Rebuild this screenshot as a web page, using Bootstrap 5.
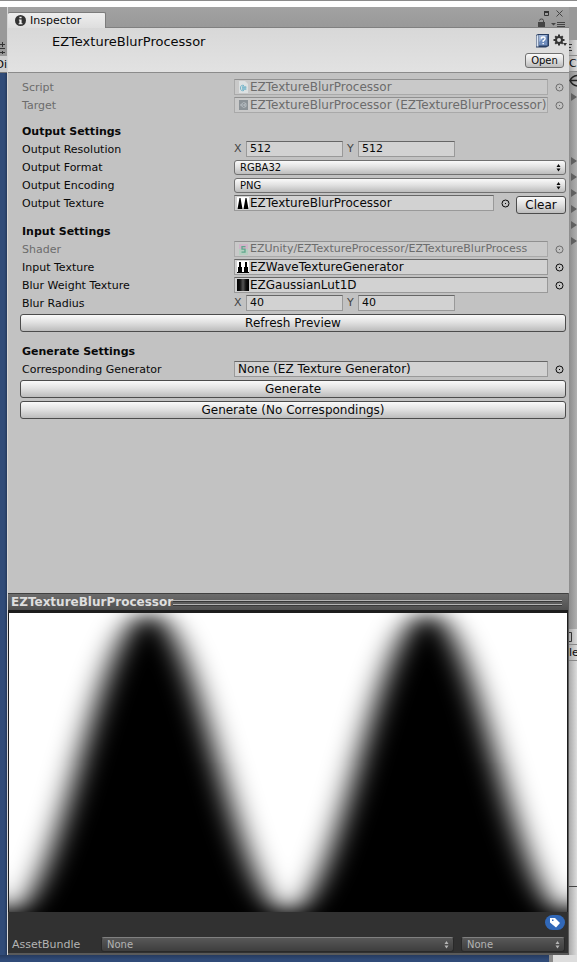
<!DOCTYPE html>
<html lang="en">
<head>
<meta charset="utf-8">
<meta name="viewport" content="width=device-width, initial-scale=1">
<title>Inspector</title>
<link href="https://cdn.jsdelivr.net/npm/bootstrap@5.3.0/dist/css/bootstrap.min.css" rel="stylesheet">
<style>
body{font-family:"DejaVu Sans",Verdana,sans-serif;font-size:11px;line-height:16px;color:#090909;background:#304b78}
svg{display:block;flex:none}
button,input,select{font:inherit;color:inherit}
.desk{display:grid;grid-template-columns:7px minmax(0,1fr) 8px;grid-template-rows:7px auto 1fr;min-height:100vh}
.menu-strip{grid-column:1/-1;background:#fff;border-top:1px solid #8b8b8b}
.left-dock,.right-dock{overflow:hidden;white-space:nowrap}
.left-dock{background:linear-gradient(90deg,#304b78 60%,#24395c)}
.dock-tab{height:33px;background:#999}
.dock-tool{height:16px;background:#999}
.dock-name{height:17px;line-height:17px;background:#cfcfcf;border-bottom:1px solid #777;display:flex;justify-content:flex-end}
.right-dock{background:linear-gradient(90deg,#8c8c8c,#b0b0b0)}
.side-tab{height:16px;line-height:16px;background:linear-gradient(90deg,#aaa,#dadada);border-bottom:1px solid #888}
.side-list{height:557px}
.side-pane{height:226px;background:linear-gradient(90deg,#aaa,#dcdcdc);border-bottom:1px solid #444}
.side-rest{height:68px;background:linear-gradient(90deg,#aaa,#dcdcdc)}
.desk-foot{grid-column:1/-1;background:linear-gradient(#263b5f,#304b78 5px)}
.desk-foot span{width:28px;background:#ddd;border-left:4px solid #8a8a8a}
.inspector{background:#c2c2c2;border-left:1px solid #d6d6d6}
.tabs-bar{height:21px;background:linear-gradient(#a2a2a2,#999);border-bottom:1px solid #808080}
.tab-item{height:16px;width:98px;background:linear-gradient(#eee,#dedede);border:1px solid #7c7c7c;border-width:1px 1px 0 0;border-radius:2px 2px 0 0;padding-left:7px;margin-top:5px}
.asset-head{height:45px;background:linear-gradient(#d8d8d8,#e2e2e2);border-bottom:1px solid #8b8b8b;padding:5px 1px 0 44px}
.asset-title{font-size:13px;line-height:18px;margin:0}
.plain-btn{border:0;padding:0;background:none;display:block}
.fields{min-height:520px;padding:5px 3px 0 12px}
.field-row{display:grid;grid-template-columns:212px minmax(0,1fr);height:18px;padding-left:2px;align-items:center}
.field-row>label,.row-label{line-height:16px;padding-top:2px;white-space:nowrap}
.section-title{font-size:11px;font-weight:700;line-height:16px;padding-top:2px;margin:10px 0 0 2px}
.section-title.first{margin-top:8px}
.off{color:#6c6c6c}
.box{height:16px;background:#d2d2d2;border:1px solid #999;border-top-color:#666;min-width:0;padding:0 0 0 2px}
.off .box{background:#c9c9c9;border-color:#a9a9a9;border-top-color:#909090}
.box input{border:0;background:none;padding:0 0 0 1px;width:100%;min-width:0;height:14px;outline:0;font-size:12px}
.box input.path-text{font-size:11px}
.with-action{padding-top:1px}
.num{width:97px;height:16px;background:#d2d2d2;border:1px solid #999;border-top-color:#666;padding:0 3px;border-radius:0}
.axis{width:12px;color:#444}
.num+.axis{width:15px;padding-left:4px}
.pick{width:18px;padding-left:7px}
.raised{background:linear-gradient(#fafafa,#e2e2e2 45%,#bcbcbc);border:1px solid #4c4c4c;border-radius:3px;height:18px;line-height:16px;font-size:12px;padding:0;text-align:center;display:block}
.wide{margin-top:2px}
.wide+.wide{margin-top:3px}
.clear-btn{width:50px;margin:1px 0 0 4px;flex:none}
.open-btn{width:39px;height:15px;line-height:13px;font-size:10px;border-color:#707070;margin:5px 4px 0 auto}
.menu{display:grid}
.menu select,.menu svg{grid-area:1/1}
.menu svg{justify-self:end;align-self:center;margin-right:5px;pointer-events:none}
.menu select{appearance:none;width:100%;height:15px;line-height:13px;font-size:10px;padding:0 5px;border:1px solid #707070;border-radius:3px;background:linear-gradient(#fafafa,#e2e2e2 45%,#bcbcbc)}
.preview{background:#313131;border:1px solid #5a5a5a;border-width:0 1px 2px 0}
.preview-bar{height:17px;background:linear-gradient(#6c6c6c,#505050);border-top:1px solid #404040;padding:0 6px 0 3px}
.preview-title{font-size:12px;font-weight:700;line-height:16px;color:#dedede;margin:0}
.grip{height:5px;border:1px solid #b4b4b4;border-width:1px 0;box-shadow:0 1px #383838,inset 0 1px #383838}
.canvas{border:1px solid #1d1d1d;border-width:3px 1px 0 1px}
.canvas svg{width:100%;height:auto;aspect-ratio:558/299;background:#fff}
.bundle{padding:0 3px 0 4px;color:#b4b4b4;height:17px}
.bundle .menu select{background:linear-gradient(#585858,#3e3e3e);border-color:#808080 #292929 #292929;color:#b4b4b4}
.bundle-label{width:89px}
.variant{width:104px;margin-left:7px}
.tag-row{padding:3px 3px 0 0;height:24px}
.tag{width:20px;height:15px;border-radius:8px;background:#3168b8;padding:2px 4px}
</style>
</head>
<body>
<svg width="0" height="0" aria-hidden="true" class="position-absolute"><defs>
<symbol id="picker" viewBox="0 0 9 9"><circle cx="4.5" cy="4.5" r="3.500" fill="none" stroke="currentColor"/><path d="M4 4h1v1h-1z" fill="currentColor"/></symbol>
<symbol id="updown" viewBox="0 0 5 9"><path d="M2.500 1 4.500 4H.5zM2.500 8.500 .5 5.500h4z" fill="currentColor"/></symbol>
</defs></svg>
<div class="desk">
  <div class="menu-strip"></div>
  <div class="left-dock">
    <div class="dock-tab"></div>
    <div class="dock-tool"><svg width="7" height="15" viewBox="0 0 7 15"><path d="M0 4.500h2m1 0h2M0 8.500h5M0 12.500h2m1 0h2M2.500 2v5m0 4v3" stroke="#333" fill="none"/></svg></div>
    <div class="dock-name">Di</div>
  </div>
  <main class="inspector d-flex flex-column">
    <div class="tabs-bar d-flex justify-content-between">
      <div class="tab-item d-flex align-items-center gap-1">
        <svg width="11" height="11" viewBox="0 0 10 10"><circle cx="5" cy="5" r="5" fill="#333"/><path d="M4 1.500h2v1.500H4zM3.500 4H6v3.500h.8v1H3.300v-1H4V5h-.5z" fill="#eee"/></svg>
        <span>Inspector</span>
      </div>
      <svg width="32" height="20" viewBox="0 0 32 20"><path d="M7.500 4.500h4v4h-4z" fill="none" stroke="#333"/><path d="M7 4h5v2H7z" fill="#333"/><path d="m19.500 3.500 6 6m0-6-6 6" stroke="#444" fill="none"/><path d="M1 15h7v5H1z" fill="#444"/><path d="M6.500 15v-1.500q0-1.500-2-1.500t-2 1.500" stroke="#444" fill="none"/><path d="M14 16h5l-2.500 2.500zM20 15h8v1h-8zM20 17h8v1h-8zM20 19h8v1h-8z" fill="#444"/></svg>
    </div>
    <header class="asset-head d-flex justify-content-between">
      <h1 class="asset-title">EZTextureBlurProcessor</h1>
      <div>
        <div class="d-flex justify-content-end">
          <button class="plain-btn me-1" aria-label="Help"><svg width="14" height="15" viewBox="0 0 14 15"><path d="M1 2 3 1h11v12l-3 1.500H1z" fill="#2a3f63"/><path d="M4 2h8.500v10.500H4z" fill="#6f8dbd"/><path d="M4 2h8.500L4 9z" fill="#9db4d8"/><path d="M1.500 2.500 3.500 2v11.500h-2z" fill="#dce6f4"/><path d="M6.300 5.700q0-1.700 1.900-1.700t1.900 1.600T8.200 7.700V9M8.200 10v1.300" fill="none" stroke="#fff" stroke-width="1.400"/></svg></button>
          <button class="plain-btn" aria-label="Settings"><svg width="15" height="15" viewBox="0 0 15 15"><circle cx="6" cy="7" r="3" fill="none" stroke="#333" stroke-width="2"/><path d="M6 1.500V4m0 6v2.500M.5 7H3m6 0h2.500M2.200 3.200l1.700 1.700m4.200 4.200 1.700 1.700m0-7.600L8.100 4.900M3.900 9.100l-1.700 1.700" stroke="#333" stroke-width="2"/><path d="M10 10h4l-2 3z" fill="#333"/></svg></button>
        </div>
        <button class="raised open-btn">Open</button>
      </div>
    </header>
    <form class="fields flex-grow-1" onsubmit="return false">
      <div class="field-row off"><label for="f1">Script</label><div class="d-flex align-items-center"><div class="box d-flex flex-grow-1 align-items-center"><svg width="12" height="12" viewBox="0 0 12 12"><path d="M2 0h6l3 3v9H2z" fill="#dde1e2"/><path d="M7 4.500Q3.500 3.500 3.500 7T7 9.500M8 5v4m-2-4v4M5 6.200h4.500M5 8h4.500" fill="none" stroke="#72b4ca"/></svg><input id="f1" value="EZTextureBlurProcessor" disabled></div><button type="button" class="plain-btn pick" aria-label="Pick script" disabled><svg width="9" height="9"><use href="#picker"/></svg></button></div></div>
      <div class="field-row off"><label for="f2">Target</label><div class="d-flex align-items-center"><div class="box d-flex flex-grow-1 align-items-center"><svg width="12" height="12" viewBox="0 0 12 12"><path d="M2 1h9v10H2z" fill="#8b9297"/><path d="m3.500 6 3-2.500 2.500 1v3l-2.500 1zM3.500 6h3L9 4.500M6.500 6 9 7.500" fill="none" stroke="#b4bbc0"/></svg><input id="f2" value="EZTextureBlurProcessor (EZTextureBlurProcessor)" disabled></div><button type="button" class="plain-btn pick" aria-label="Pick target" disabled><svg width="9" height="9"><use href="#picker"/></svg></button></div></div>

      <h2 class="section-title first">Output Settings</h2>
      <div class="field-row"><span class="row-label">Output Resolution</span><div class="d-flex align-items-center"><label class="axis" for="rx">X</label><input class="num" id="rx" value="512"><label class="axis" for="ry">Y</label><input class="num" id="ry" value="512"></div></div>
      <div class="field-row"><label for="fmt">Output Format</label><div class="menu"><select id="fmt"><option>RGBA32</option></select><svg width="5" height="9"><use href="#updown"/></svg></div></div>
      <div class="field-row"><label for="enc">Output Encoding</label><div class="menu"><select id="enc"><option>PNG</option></select><svg width="5" height="9"><use href="#updown"/></svg></div></div>
      <div class="field-row align-items-start"><label for="f3">Output Texture</label><div class="with-action d-flex align-items-start"><div class="box d-flex flex-grow-1 align-items-center"><svg width="12" height="12" viewBox="0 0 12 12"><path d="M0 0h12v12H0z" fill="#fff"/><path d="M.5 12 2.500 1h1l2 11zM6.500 12 8.500 1h1l2 11z"/></svg><input id="f3" value="EZTextureBlurProcessor"></div><button type="button" class="plain-btn pick pt-1" aria-label="Pick output texture"><svg width="9" height="9"><use href="#picker"/></svg></button><button type="button" class="raised clear-btn">Clear</button></div></div>

      <h2 class="section-title">Input Settings</h2>
      <div class="field-row off"><label for="f4">Shader</label><div class="d-flex align-items-center"><div class="box d-flex flex-grow-1 align-items-center"><svg width="12" height="12" viewBox="0 0 12 12"><path d="M2 1h9v5H2z" fill="#d0b4c8"/><path d="M2 6h9v6H2z" fill="#b4cfc0"/><path d="M8.500 3.700H5v2.500h3v3H4.500" fill="none" stroke="#5fa68c" stroke-width="1.300"/></svg><input id="f4" class="path-text" value="EZUnity/EZTextureProcessor/EZTextureBlurProcess" disabled></div><button type="button" class="plain-btn pick" aria-label="Pick shader" disabled><svg width="9" height="9"><use href="#picker"/></svg></button></div></div>
      <div class="field-row"><label for="f5">Input Texture</label><div class="d-flex align-items-center"><div class="box d-flex flex-grow-1 align-items-center"><svg width="12" height="12" viewBox="0 0 12 12"><path d="M0 0h12v12H0z" fill="#fff"/><path d="M1 12V6h1V1h2v5h1v6zM7 12V6h1V1h2v5h1v6zM0 11h12v1H0z"/></svg><input id="f5" value="EZWaveTextureGenerator"></div><button type="button" class="plain-btn pick" aria-label="Pick input texture"><svg width="9" height="9"><use href="#picker"/></svg></button></div></div>
      <div class="field-row"><label for="f6">Blur Weight Texture</label><div class="d-flex align-items-center"><div class="box d-flex flex-grow-1 align-items-center"><svg width="12" height="12"><linearGradient id="lut"><stop stop-color="#000"/><stop offset=".25" stop-color="#111"/><stop offset=".5" stop-color="#555"/><stop offset=".75" stop-color="#111"/><stop offset="1"/></linearGradient><path d="M0 0h12v12H0z" fill="url(#lut)"/></svg><input id="f6" value="EZGaussianLut1D"></div><button type="button" class="plain-btn pick" aria-label="Pick blur weight texture"><svg width="9" height="9"><use href="#picker"/></svg></button></div></div>
      <div class="field-row"><span class="row-label">Blur Radius</span><div class="d-flex align-items-center"><label class="axis" for="bx">X</label><input class="num" id="bx" value="40"><label class="axis" for="by">Y</label><input class="num" id="by" value="40"></div></div>
      <button type="button" class="raised wide w-100">Refresh Preview</button>

      <h2 class="section-title">Generate Settings</h2>
      <div class="field-row"><label for="f7">Corresponding Generator</label><div class="d-flex align-items-center"><div class="box d-flex flex-grow-1 align-items-center"><input id="f7" value="None (EZ Texture Generator)"></div><button type="button" class="plain-btn pick" aria-label="Pick generator"><svg width="9" height="9"><use href="#picker"/></svg></button></div></div>
      <button type="button" class="raised wide w-100">Generate</button>
      <button type="button" class="raised wide w-100">Generate (No Correspondings)</button>
    </form>
    <section class="preview">
      <div class="preview-bar d-flex align-items-center"><h2 class="preview-title">EZTextureBlurProcessor</h2><div class="grip flex-grow-1"></div></div>
      <div class="canvas"><svg viewBox="0 0 558 299" preserveAspectRatio="none"><defs><filter id="soft" filterUnits="userSpaceOnUse" x="-100" y="-60" width="758" height="420" color-interpolation-filters="sRGB"><feGaussianBlur stdDeviation="15 9"/></filter></defs><path filter="url(#soft)" d="M-139.500 0C-88.700 0-50.800 299 0 299S88.700 0 139.500 0 228.200 299 279 299 367.700 0 418.500 0 507.200 299 558 299 646.700 0 697.500 0V340H-139.500z"/></svg></div>
      <div class="tag-row d-flex justify-content-end"><button class="plain-btn tag" aria-label="Labels"><svg width="12" height="11" viewBox="0 0 12 11"><path fill-rule="evenodd" d="M1 1h5l5 5-4 4.500-6-5zM3 2.500v1.500h1.500V2.500z" fill="#fff"/></svg></button></div>
      <div class="bundle d-flex align-items-center"><label class="bundle-label" for="b1">AssetBundle</label><div class="menu flex-grow-1"><select id="b1"><option>None</option></select><svg width="5" height="9"><use href="#updown"/></svg></div><div class="menu variant"><select aria-label="Variant"><option>None</option></select><svg width="5" height="9"><use href="#updown"/></svg></div></div>
    </section>
  </main>
  <div class="right-dock">
    <div class="dock-tab"></div>
    <div class="side-tab"><svg width="8" height="15" viewBox="0 0 8 15"><path d="M0 4.500h3M0 7.500h2M0 10.500h3" stroke="#333"/></svg></div>
    <div class="side-tab">Cr</div>
    <div class="side-list"><svg width="8" height="180" viewBox="0 0 8 180"><path d="M8 3.500Q3 4 1 8.500 3 13 8 14M2 8.500h6" stroke="#222" stroke-width="1.500" fill="none"/><path d="M2 21v8l6-4zM2 85v8l6-4zM2 101v8l6-4zM2 117v8l6-4zM2 133v8l6-4zM2 149v8l6-4zM2 165v8l6-4z" fill="#606060"/></svg></div>
    <div class="side-tab"><svg width="8" height="15" viewBox="0 0 8 15"><path d="M0 3.500h2.500v9H0" fill="none" stroke="#333"/></svg></div>
    <div class="side-tab">le</div>
    <div class="side-pane"></div>
    <div class="side-rest"></div>
  </div>
  <div class="desk-foot d-flex justify-content-end"><span></span></div>
</div>
<script src="https://cdn.jsdelivr.net/npm/bootstrap@5.3.0/dist/js/bootstrap.bundle.min.js"></script>
</body>
</html>
